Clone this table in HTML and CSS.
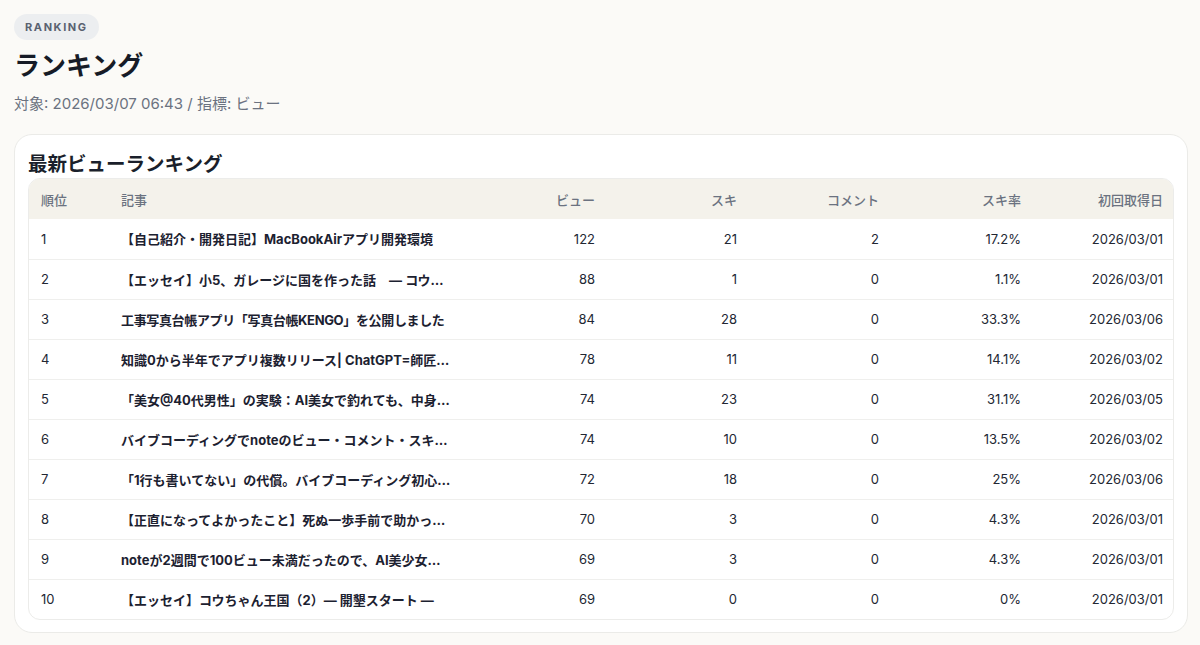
FILE: index.html
```html
<!DOCTYPE html>
<html lang="ja">
<head>
<meta charset="utf-8">
<title>ランキング</title>
<link rel="stylesheet" href="styles.css">
</head>
<body>
<main class="page">
  <span class="badge">RANKING</span>
  <h1 class="title">ランキング</h1>
  <p class="meta">対象: 2026/03/07 06:43 / 指標: ビュー</p>
  <section class="card">
    <h2 class="card-title">最新ビューランキング</h2>
    <div class="table-wrap">
      <table class="rank">
        <colgroup>
          <col class="c-rank"><col class="c-title"><col class="c-num"><col class="c-num"><col class="c-num"><col class="c-num"><col class="c-num">
        </colgroup>
        <thead>
          <tr><th>順位</th><th>記事</th><th class="r">ビュー</th><th class="r">スキ</th><th class="r">コメント</th><th class="r">スキ率</th><th class="r">初回取得日</th></tr>
        </thead>
        <tbody>
          <tr><td>1</td><td class="t"><div class="ellip">【自己紹介・開発日記】MacBookAirアプリ開発環境</div></td><td class="r">122</td><td class="r">21</td><td class="r">2</td><td class="r">17.2%</td><td class="r">2026/03/01</td></tr>
          <tr><td>2</td><td class="t"><div class="ellip">【エッセイ】小5、ガレージに国を作った話　— コウちゃん王国（1）—</div></td><td class="r">88</td><td class="r">1</td><td class="r">0</td><td class="r">1.1%</td><td class="r">2026/03/01</td></tr>
          <tr><td>3</td><td class="t"><div class="ellip tight">工事写真台帳アプリ「写真台帳KENGO」を公開しました</div></td><td class="r">84</td><td class="r">28</td><td class="r">0</td><td class="r">33.3%</td><td class="r">2026/03/06</td></tr>
          <tr><td>4</td><td class="t"><div class="ellip">知識0から半年でアプリ複数リリース| ChatGPT=師匠、Claude=相棒</div></td><td class="r">78</td><td class="r">11</td><td class="r">0</td><td class="r">14.1%</td><td class="r">2026/03/02</td></tr>
          <tr><td>5</td><td class="t"><div class="ellip">「美女@40代男性」の実験：AI美女で釣れても、中身はおじさん</div></td><td class="r">74</td><td class="r">23</td><td class="r">0</td><td class="r">31.1%</td><td class="r">2026/03/05</td></tr>
          <tr><td>6</td><td class="t"><div class="ellip">バイブコーディングでnoteのビュー・コメント・スキを集計するアプリ</div></td><td class="r">74</td><td class="r">10</td><td class="r">0</td><td class="r">13.5%</td><td class="r">2026/03/02</td></tr>
          <tr><td>7</td><td class="t"><div class="ellip">「1行も書いてない」の代償。バイブコーディング初心者の失敗</div></td><td class="r">72</td><td class="r">18</td><td class="r">0</td><td class="r">25%</td><td class="r">2026/03/06</td></tr>
          <tr><td>8</td><td class="t"><div class="ellip">【正直になってよかったこと】死ぬ一歩手前で助かった話</div></td><td class="r">70</td><td class="r">3</td><td class="r">0</td><td class="r">4.3%</td><td class="r">2026/03/01</td></tr>
          <tr><td>9</td><td class="t"><div class="ellip">noteが2週間で100ビュー未満だったので、AI美少女を投入した</div></td><td class="r">69</td><td class="r">3</td><td class="r">0</td><td class="r">4.3%</td><td class="r">2026/03/01</td></tr>
          <tr><td>10</td><td class="t"><div class="ellip">【エッセイ】コウちゃん王国（2）— 開墾スタート —</div></td><td class="r">69</td><td class="r">0</td><td class="r">0</td><td class="r">0%</td><td class="r">2026/03/01</td></tr>
        </tbody>
      </table>
    </div>
  </section>
</main>
</body>
</html>
```

FILE: styles.css
```css
* { box-sizing: border-box; }
html, body { margin: 0; padding: 0; }
body {
  background: #fbfaf7;
  font-family: "Inter", "Noto Sans CJK JP", sans-serif;
  color: #1f2430;
}
.page {
  padding: 14px 12px 12px 14px;
  display: flex;
  flex-direction: column;
  align-items: flex-start;
}
.badge {
  display: inline-block;
  background: #eceef0;
  color: #5a6270;
  font-size: 11px;
  font-weight: 700;
  letter-spacing: 1.6px;
  line-height: 26px;
  height: 26px;
  padding: 0 11px 0 11px;
  border-radius: 13px;
}
.title {
  margin: 10px 0 0 0;
  font-size: 26px;
  line-height: 32px;
  font-weight: 700;
  color: #161b26;
}
.meta {
  margin: 12px 0 0 0;
  font-size: 15px;
  line-height: 20px;
  color: #6b7280;
}
.card {
  align-self: stretch;
  margin-top: 20px;
  background: #ffffff;
  border: 1px solid #ebebe8;
  border-radius: 18px;
  padding: 15px 13px 12px 13px;
}
.card-title {
  margin: 0;
  font-size: 19.5px;
  line-height: 28px;
  font-weight: 700;
  color: #1a1f2b;
}
.table-wrap {
  border: 1px solid #ececea;
  border-radius: 12px;
  overflow: hidden;
}
.rank {
  width: 100%;
  border-collapse: collapse;
  table-layout: fixed;
  font-size: 13px;
}
.c-rank { width: 80px; }
.c-title { width: 356px; }
.c-num { width: 142px; }
.rank th {
  background: #f4f2eb;
  color: #6b7280;
  font-weight: 500;
  text-align: left;
  height: 40px;
  padding: 0 12px;
  font-size: 13px;
}
.rank td {
  height: 40px;
  padding: 0 12px;
  border-top: 1px solid #efefed;
  color: #222733;
}
.rank thead + tbody tr:first-child td { border-top: none; }
.rank .r { text-align: right; }
.rank td.t { font-weight: 700; color: #1c2130; }
.ellip {
  white-space: nowrap;
  overflow: hidden;
  text-overflow: ellipsis;
}
.ellip.tight { letter-spacing: -0.35px; }
```
